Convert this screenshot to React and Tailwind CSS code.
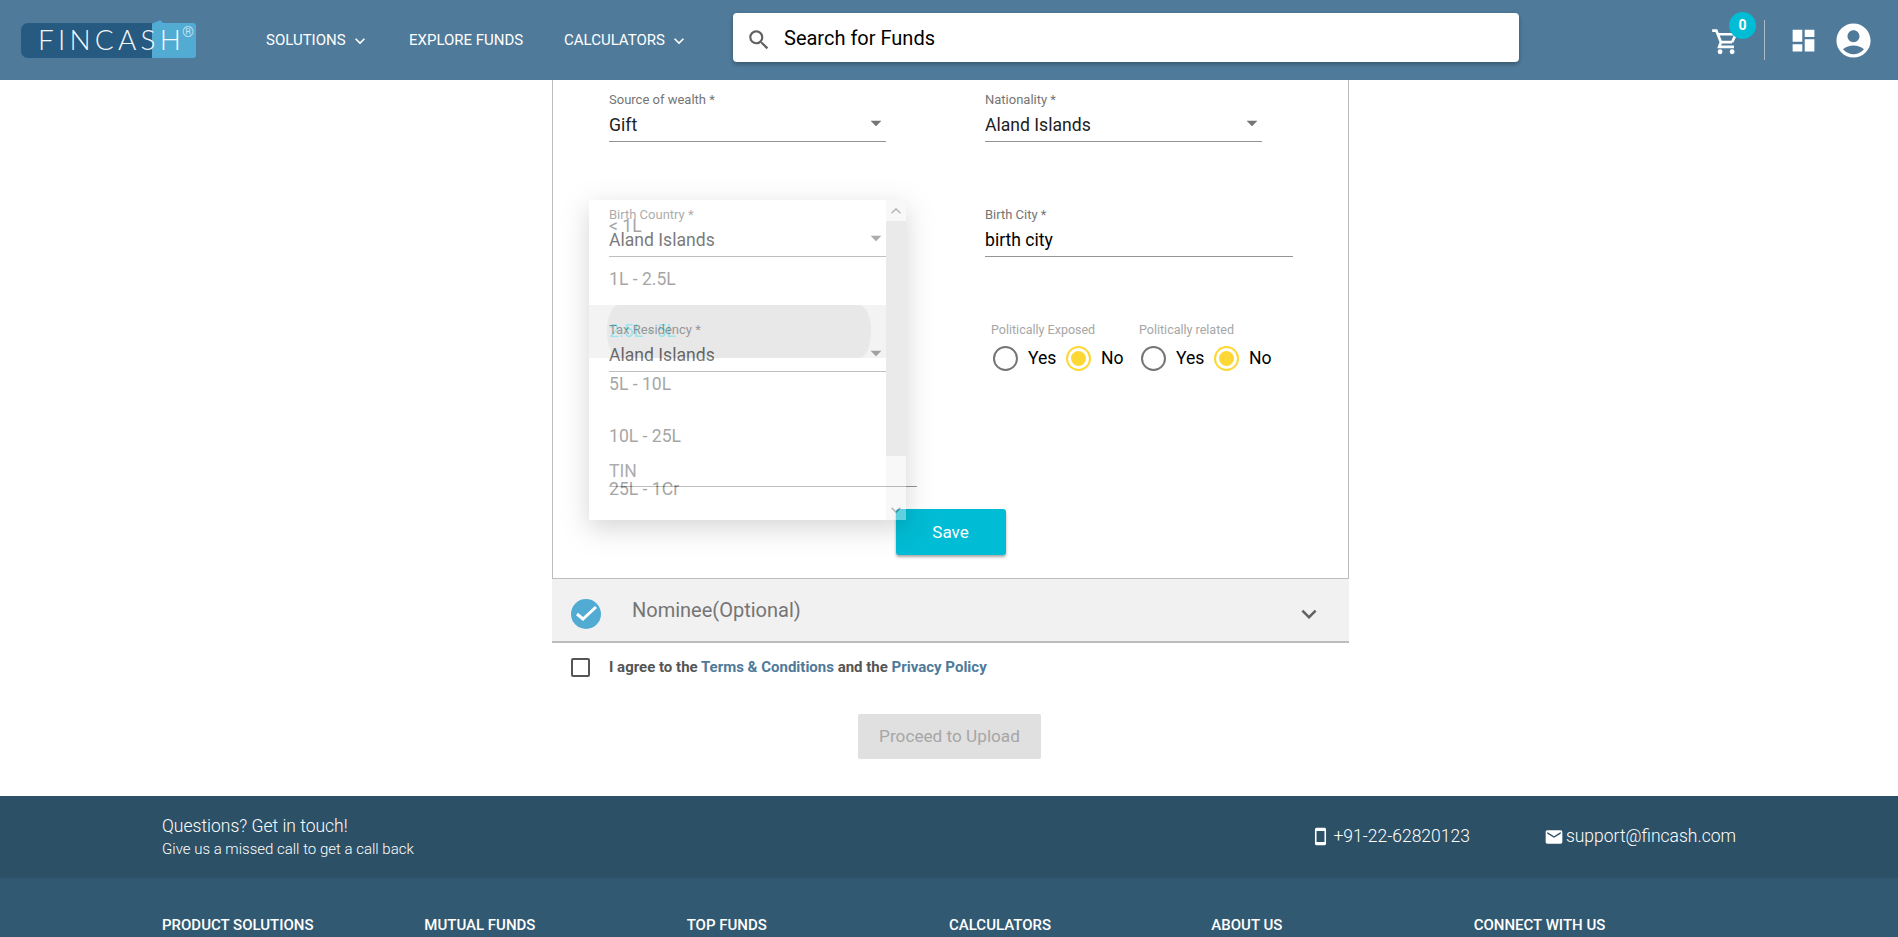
import React from 'react';
import {
  MdSearch,
  MdDashboard,
  MdAccountCircle,
  MdKeyboardArrowDown,
  MdKeyboardArrowUp,
  MdArrowDropDown,
  MdExpandMore,
  MdStayCurrentPortrait,
  MdEmail,
} from 'react-icons/md';

const INCOME_OPTIONS = ['< 1L', '1L - 2.5L', '2.5L - 5L', '5L - 10L', '10L - 25L', '25L - 1Cr'];
const FOOTER_COLUMNS = ['PRODUCT SOLUTIONS', 'MUTUAL FUNDS', 'TOP FUNDS', 'CALCULATORS', 'ABOUT US', 'CONNECT WITH US'];

const Logo = () => (
  <svg width="178" height="40" viewBox="0 0 178 40" className="shrink-0">
    <path d="M8 3H133L140 0V38H8a7 7 0 0 1-7-7V10a7 7 0 0 1 7-7z" fill="#265a80" />
    <path d="M132 3.5L140 0L143 3H173a3 3 0 0 1 3 3V35a3 3 0 0 1-3 3H132z" fill="#52abd3" />
    <text x="18" y="30" fill="#f4f8fb" fontFamily="Lato, sans-serif" fontWeight="300" fontSize="28" letterSpacing="4.2">FINCASH</text>
    <text x="162" y="17" fill="#dcebf4" fontFamily="Roboto, sans-serif" fontWeight="300" fontSize="15">®</text>
  </svg>
);

const CartIcon = () => (
  <svg width="29" height="29" viewBox="0 0 24 24" fill="none" stroke="white" strokeWidth="2.2">
    <path d="M1 3h3.4l3.8 9.5h9.3M5 6h15.5l-3 6.5M8.2 12.5l-1.5 4H19" />
    <circle cx="7.5" cy="20.5" r="2" fill="white" stroke="none" />
    <circle cx="17.5" cy="20.5" r="2" fill="white" stroke="none" />
  </svg>
);

const SelectField = ({ label, value }) => (
  <div className="w-[277px] h-[50px] border-b border-[#949494] relative">
    <div className="text-[13px] leading-4 text-[#757575]">{label}</div>
    <div className="text-[17.6px] leading-[22px] mt-[6px] text-[#212121]">{value}</div>
    <MdArrowDropDown className="absolute right-[-3px] top-[18px] text-[#757575]" size={26} />
  </div>
);

const Radio = ({ checked }) => (
  <span className={`w-[25px] h-[25px] rounded-full border-2 flex items-center justify-center shrink-0 ${checked ? 'border-[#fdd835]' : 'border-[#757575]'}`}>
    {checked && <span className="w-[15px] h-[15px] rounded-full bg-[#fdd835]" />}
  </span>
);

const RadioGroup = ({ label, className }) => (
  <div className={className}>
    <div className="text-[12.5px] leading-4 text-[#a6a6a6]">{label}</div>
    <div className="flex items-center mt-[8px] h-[25px] text-[17.6px] text-black ml-[2px]">
      <Radio />
      <span className="ml-[10px] w-[38px]">Yes</span>
      <Radio checked />
      <span className="ml-[10px]">No</span>
    </div>
  </div>
);

const IncomeMenu = () => (
  <div className="absolute left-[36px] top-[120px] w-[317px] h-[320px] bg-white opacity-40 shadow-[0_8px_24px_rgba(0,0,0,0.4)] flex overflow-hidden text-[17.6px] text-[#212121]">
    <div className="w-[297px]">
      {INCOME_OPTIONS.map((opt, i) => (
        <div key={opt} className={`h-[52.5px] pl-[20px] flex items-center relative ${i === 2 ? 'bg-[#e2e2e2] text-[#00bcd4]' : ''}`}>
          {i === 2 && <span className="absolute left-[18px] right-[15px] inset-y-0 rounded-[12px/26px] bg-[#c8c8c8]" />}
          <span className="relative">{opt}</span>
        </div>
      ))}
    </div>
    <div className="w-[20px] bg-[#f0f0f0] flex flex-col">
      <div className="h-[21px] flex items-center justify-center text-[#555]"><MdKeyboardArrowUp size={20} /></div>
      <div className="h-[235px] bg-[#cdcdcd]" />
      <div className="flex-1 flex items-end justify-center text-[#555]"><MdKeyboardArrowDown size={20} /></div>
    </div>
  </div>
);

const App = () => {
  return (
    <div className="h-screen overflow-hidden bg-white font-[Roboto,sans-serif]">
      <header className="h-[80px] bg-[#4f7a9a] flex items-center text-white relative">
        <div className="ml-[20px] flex"><Logo /></div>
        <nav className="flex items-center text-[15px] ml-[68px] mt-[1px]">
          <span className="flex items-center w-[143px]">SOLUTIONS<MdKeyboardArrowDown className="ml-[4px]" size={20} /></span>
          <span className="w-[155px]">EXPLORE FUNDS</span>
          <span className="flex items-center w-[169px]">CALCULATORS<MdKeyboardArrowDown className="ml-[4px]" size={20} /></span>
        </nav>
        <div className="w-[786px] h-[49px] bg-white rounded-[4px] shadow-[0_2px_4px_rgba(0,0,0,0.3)] flex items-center text-black text-xl mt-[-5px]">
          <MdSearch className="ml-[13px] mt-[4px] text-[#616161]" size={26} />
          <span className="ml-[12px]">Search for Funds</span>
        </div>
        <div className="ml-auto flex items-center mr-[24px]">
          <div className="relative mr-[24px] mt-[2px]">
            <CartIcon />
            <span className="absolute top-[-15px] left-[18px] w-[27px] h-[27px] rounded-full bg-[#00bcd4] flex items-center justify-center text-sm font-bold">0</span>
          </div>
          <div className="w-px h-[40px] bg-[#a9b9c5]" />
          <MdDashboard className="ml-[24px] mt-[1px]" size={29} />
          <MdAccountCircle className="ml-[15px]" size={41} />
        </div>
      </header>

      <main className="ml-[552px] w-[797px]">
        <section className="relative border border-t-0 border-[#bdbdbd] pt-[12px] pb-[23px]">
          <div className="grid grid-cols-[376px_1fr] pl-[56px] auto-rows-[50px] gap-y-[65px]">
            <SelectField label="Source of wealth *" value="Gift" />
            <SelectField label="Nationality *" value="Aland Islands" />
            <SelectField label="Birth Country *" value="Aland Islands" />
            <div className="w-[308px] h-[50px] border-b border-[#949494]">
              <div className="text-[13px] leading-4 text-[#757575]">Birth City *</div>
              <div className="text-[17.6px] leading-[22px] mt-[6px] text-black">birth city</div>
            </div>
            <SelectField label="Tax Residency *" value="Aland Islands" />
            <div className="flex pl-[6px]">
              <RadioGroup label="Politically Exposed" className="w-[148px]" />
              <RadioGroup label="Politically related" />
            </div>
            <div className="w-[308px] h-[50px] border-b border-[#949494] text-[17.6px] text-[#757575] pt-[21px]">TIN</div>
          </div>
          <button className="block mx-auto mt-[22px] w-[110px] h-[46px] pt-[2px] rounded-[3px] bg-[#00bcd4] text-white text-[17px] shadow-[0_2px_3px_rgba(0,0,0,0.35)]">Save</button>
          <IncomeMenu />
        </section>

        <div className="h-[64px] bg-[#f1f1f1] border-b-2 border-[#bdbdbd] flex items-center pl-[19px] pr-[25px] pt-[6px]">
          <span className="w-[30px] h-[30px] rounded-full bg-[#52abd3] flex items-center justify-center mt-[2px]">
            <svg width="30" height="30" viewBox="0 0 30 30" fill="none" stroke="white" strokeWidth="3">
              <path d="M6 15l6 5L25 8" />
            </svg>
          </span>
          <span className="ml-[31px] text-xl text-[#757575] mt-[-6px]">Nominee(Optional)</span>
          <MdExpandMore className="ml-auto text-[#616161] mt-[2px]" size={30} />
        </div>

        <label className="flex items-center pl-[19px] mt-[13px] text-[15px] font-bold text-[#555]">
          <span className="w-[19px] h-[19px] rounded-[2px] border-2 border-[#555] shrink-0" />
          <span className="ml-[19px]">I agree to the <span className="text-[#4f7a9a]">Terms &amp; Conditions</span> and the <span className="text-[#4f7a9a]">Privacy Policy</span></span>
        </label>

        <button className="block ml-[306px] mt-[35px] w-[183px] h-[45px] pt-[2px] rounded-[2px] bg-[#e0e0e0] text-[#a6a6a6] text-[17.2px]">Proceed to Upload</button>
      </main>

      <footer className="mt-[37px] text-white">
        <div className="h-[82px] bg-[#2c5066]">
          <div className="w-[1574px] mx-auto h-full flex items-center justify-between">
            <div className="font-light">
              <div className="text-[17.5px] leading-6">Questions? Get in touch!</div>
              <div className="text-[15px] leading-5 mt-[1px]">Give us a missed call to get a call back</div>
            </div>
            <div className="flex items-center text-[17.5px] font-light">
              <MdStayCurrentPortrait size={19} />
              <span className="ml-[3px]">+91-22-62820123</span>
              <MdEmail className="ml-[74px]" size={20} />
              <span className="ml-[2px]">support@fincash.com</span>
            </div>
          </div>
        </div>
        <div className="h-[200px] bg-[#315a72]">
          <div className="w-[1574px] mx-auto grid grid-cols-6 pt-[36px] text-[15px] font-medium">
            {FOOTER_COLUMNS.map(col => (
              <div key={col}>{col}</div>
            ))}
          </div>
        </div>
      </footer>
    </div>
  );
};

export default App;
